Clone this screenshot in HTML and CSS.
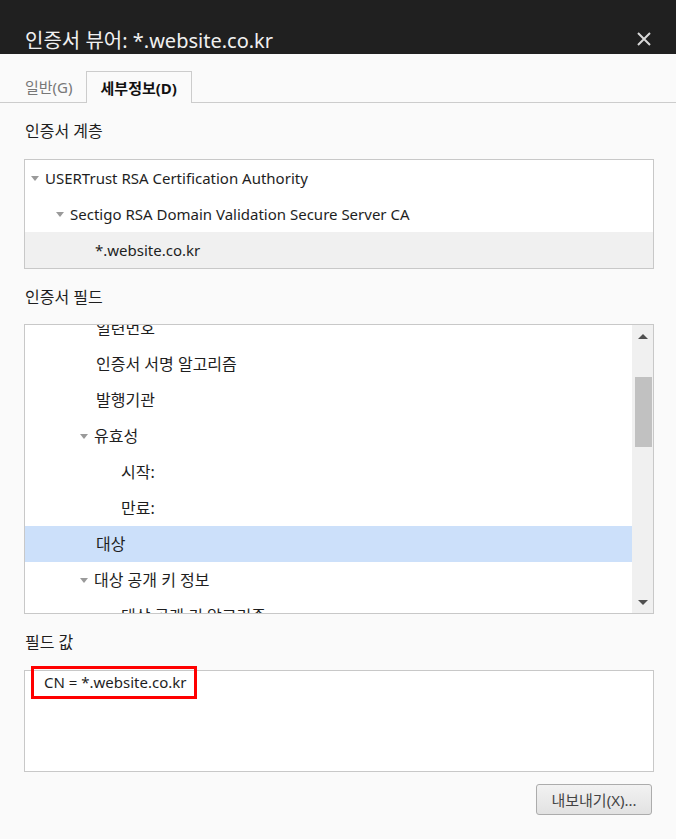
FILE: index.html
```html
<!DOCTYPE html>
<html lang="ko">
<head>
    <meta charset="UTF-8">
    <meta name="viewport" content="width=device-width, initial-scale=1.0">
    <title>인증서 뷰어</title>
    <link rel="stylesheet" href="styles.css">
</head>
<body>
    <div class="titlebar">
        <span class="title">인증서 뷰어: *.website.co.kr</span>
        <svg class="close" width="14" height="14" viewBox="0 0 14 14">
            <path d="M1 1 L13 13 M13 1 L1 13" stroke="#d8d8d8" stroke-width="2" fill="none"/>
        </svg>
    </div>

    <div class="tabs">
        <div class="tab">일반(G)</div>
        <div class="tab active">세부정보(D)</div>
    </div>

    <div class="content">
        <div class="label">인증서 계층</div>
        <div class="box hierarchy">
            <div class="row"><span class="caret"></span>USERTrust RSA Certification Authority</div>
            <div class="row lvl1"><span class="caret"></span>Sectigo RSA Domain Validation Secure Server CA</div>
            <div class="row lvl2 current">*.website.co.kr</div>
        </div>

        <div class="label fields-label">인증서 필드</div>
        <div class="box fields">
            <div class="field-list">
                <div class="row lvl2">일련번호</div>
                <div class="row lvl2">인증서 서명 알고리즘</div>
                <div class="row lvl2">발행기관</div>
                <div class="row lvl1"><span class="caret"></span>유효성</div>
                <div class="row lvl3">시작:</div>
                <div class="row lvl3">만료:</div>
                <div class="row lvl2 selected">대상</div>
                <div class="row lvl1"><span class="caret"></span>대상 공개 키 정보</div>
                <div class="row lvl3">대상 공개 키 알고리즘</div>
            </div>
            <div class="scrollbar">
                <span class="arrow up"></span>
                <div class="thumb"></div>
                <span class="arrow down"></span>
            </div>
        </div>

        <div class="label">필드 값</div>
        <div class="box value">
            <span class="mark">CN = *.website.co.kr</span>
        </div>

        <div class="actions">
            <button class="export">내보내기(X)...</button>
        </div>
    </div>
</body>
</html>
```

FILE: styles.css
```css
* {
    margin: 0;
    padding: 0;
    box-sizing: border-box;
    font-family: "Noto Sans", "Noto Sans CJK KR", sans-serif;
}

body {
    background-color: #fafafa;
    color: #1e1e1e;
    width: 676px;
    height: 839px;
    overflow: hidden;
}

.titlebar {
    height: 54px;
    background-color: #202020;
    display: flex;
    align-items: center;
    justify-content: space-between;
    padding: 24px 25px 0 25px;
}

.title {
    color: #f0f0f0;
    font-size: 20px;
}

.tabs {
    height: 49px;
    display: flex;
    align-items: flex-end;
    border-bottom: 1px solid #cccccc;
    padding-left: 25px;
}

.tab {
    height: 32px;
    line-height: 32px;
    font-size: 15px;
    color: #777;
    margin-bottom: -1px;
}

.tab.active {
    margin-left: 13px;
    padding: 0 14px;
    border: 1px solid #cccccc;
    border-bottom: none;
    background-color: #fafafa;
    color: #111;
    font-weight: bold;
}

.content {
    padding: 0 22px 0 24px;
}

.label {
    font-size: 16px;
    height: 56px;
    line-height: 56px;
    padding-left: 1px;
}

.fields-label {
    height: 55px;
}

.box {
    border: 1px solid #c8c8c8;
    background-color: #fff;
}

.row {
    height: 36px;
    line-height: 34px;
    font-size: 15px;
    padding-left: 6px;
    display: flex;
    align-items: center;
    white-space: nowrap;
}

.caret {
    width: 0;
    height: 0;
    border-left: 4.5px solid transparent;
    border-right: 4.5px solid transparent;
    border-top: 5px solid #9a9a9a;
    margin-right: 6px;
}

.lvl1 {
    padding-left: 31px;
}

.lvl2 {
    padding-left: 71px;
}

.lvl3 {
    padding-left: 96px;
}

.hierarchy .lvl2 {
    padding-left: 70px;
}

.current {
    background-color: #f0f0f0;
}

.fields {
    height: 290px;
    display: flex;
    overflow: hidden;
}

.fields .row {
    font-size: 16px;
}

.fields .lvl1 {
    padding-left: 55px;
}

.field-list {
    flex: 1;
    margin-top: -15px;
}

.selected {
    background-color: #cce0fa;
}

.scrollbar {
    width: 21px;
    background-color: #f0f0f0;
    display: flex;
    flex-direction: column;
    align-items: center;
}

.thumb {
    width: 17px;
    height: 70px;
    background-color: #c1c1c1;
    margin-top: 38px;
    margin-left: 1px;
}

.arrow {
    width: 0;
    height: 0;
    border-left: 5px solid transparent;
    border-right: 5px solid transparent;
}

.arrow.up {
    border-bottom: 5px solid #505050;
    margin-top: 9px;
}

.arrow.down {
    border-top: 5px solid #505050;
    margin-top: auto;
    margin-bottom: 8px;
}

.value {
    height: 102px;
    position: relative;
}

.mark {
    position: absolute;
    left: 6px;
    top: -5px;
    border: 3px solid #ff0000;
    padding: 0 8px 0 10px;
    height: 33px;
    line-height: 27px;
    font-size: 15px;
}

.actions {
    display: flex;
    justify-content: flex-end;
    padding-top: 12px;
    padding-right: 2px;
}

.export {
    width: 116px;
    height: 31px;
    border: 1px solid #acacac;
    border-radius: 3px;
    background: linear-gradient(#f2f2f2, #e2e2e2);
    color: #444;
    font-size: 15px;
}
```
